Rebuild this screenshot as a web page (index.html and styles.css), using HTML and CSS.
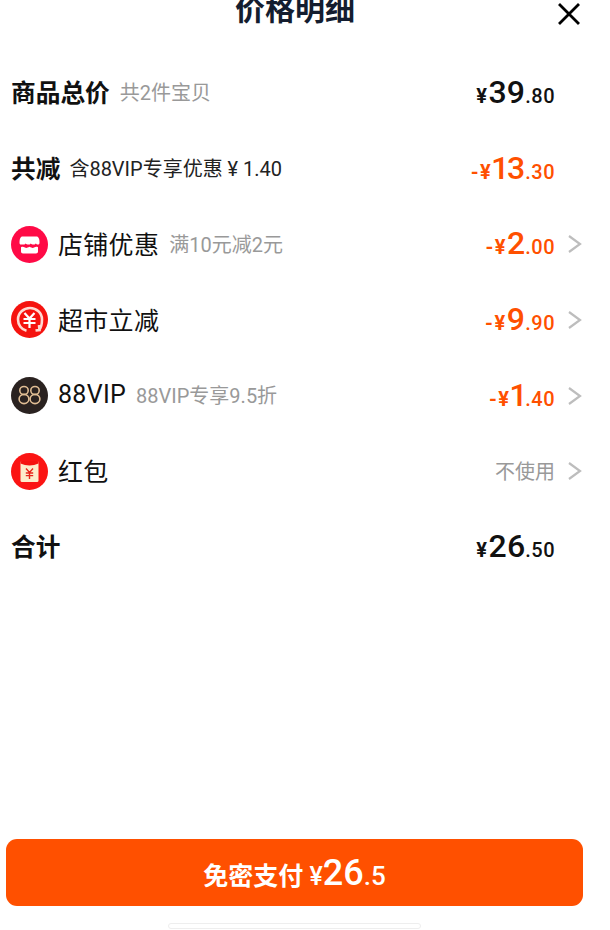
FILE: index.html
```html
<!DOCTYPE html>
<html>
<head>
	<meta charset="UTF-8">
	<title>价格明细</title>
	<link rel="stylesheet" href="styles.css">
</head>
<body>
	<div class="page">
		<div class="header">
			<h1 class="title">价格明细</h1>
			<svg class="close" width="24" height="24" viewBox="0 0 24 24"><path d="M3 3L21 21M21 3L3 21" stroke="#000" stroke-width="2.8" stroke-linecap="square" fill="none"/></svg>
		</div>
		<div class="list">
			<div class="row">
				<span class="label strong">商品总价</span>
				<span class="note">共2件宝贝</span>
				<span class="price"><i>¥</i><b>39</b><em>.80</em></span>
				<span class="slot"></span>
			</div>
			<div class="row">
				<span class="label strong">共减</span>
				<span class="note dark">含88VIP专享优惠 ¥ 1.40</span>
				<span class="price red"><i>-¥</i><b>13</b><em>.30</em></span>
				<span class="slot"></span>
			</div>
			<div class="row">
				<svg class="icon" viewBox="0 0 37 37">
					<circle cx="18.5" cy="18.5" r="18.5" fill="#ff0a46"/>
					<path d="M11.5 10.5H25.5C27.5 10.5 28.5 13 28.5 16.5C28.5 18 28 18.6 27 18.6C25.8 18.6 25.2 17.8 24.8 17.4C24.2 18.2 23.3 18.6 22.4 18.6C21.3 18.6 20.3 18 19.8 17.4C19.2 18.2 18.3 18.6 17.3 18.6C16.2 18.6 15.2 18 14.6 17.4C14 18.2 13.1 18.6 12 18.6H10C8.9 18.6 8.5 18 8.5 16.5C8.5 13 9.5 10.5 11.5 10.5Z" fill="#fff"/>
					<path d="M10 21.2C11.5 20.6 12.5 20.8 14 21.6C15.5 22.4 16.5 21.6 18.5 20.8C20.5 21.6 21.5 22.4 23 21.6C24.5 20.8 25.5 20.6 27 21.2V25.5C27 26.6 26.2 27.5 25 27.5H12C10.8 27.5 10 26.6 10 25.5Z" fill="#fff"/>
				</svg>
				<span class="label">店铺优惠</span>
				<span class="note">满10元减2元</span>
				<span class="price red"><i>-¥</i><b>2</b><em>.00</em></span>
				<svg class="slot arrow" viewBox="0 0 27 20"><path d="M14 2L25 10L14 18" stroke="#bdbdbd" stroke-width="2.2" fill="none"/></svg>
			</div>
			<div class="row">
				<svg class="icon" viewBox="0 0 37 37">
					<circle cx="18.5" cy="18.5" r="18.5" fill="#f5130f"/>
					<path d="M24 29.5L28 29L27.5 24M27.5 29C30 26.5 30.5 23 30.5 18.5C30.5 12 25 7 18.5 7C12 7 6.5 12 6.5 18.5C6.5 24 10 28.5 15 29.8" stroke="#ffd9d2" stroke-width="2.6" fill="none" transform="translate(0.5 0)"/>
					<path d="M13.5 12L18.5 17.5L23.5 12M12.5 18H24.5M12.5 22H24.5M18.5 17.5V27" stroke="#fff" stroke-width="2.2" fill="none"/>
				</svg>
				<span class="label">超市立减</span>
				<span class="price red"><i>-¥</i><b>9</b><em>.90</em></span>
				<svg class="slot arrow" viewBox="0 0 27 20"><path d="M14 2L25 10L14 18" stroke="#bdbdbd" stroke-width="2.2" fill="none"/></svg>
			</div>
			<div class="row">
				<svg class="icon" viewBox="0 0 37 37">
					<circle cx="18.5" cy="18.5" r="18.5" fill="#2a2220"/>
					<g fill="none" stroke="#e0bd94" stroke-width="1.6">
						<ellipse cx="13" cy="13.5" rx="4.2" ry="4"/><ellipse cx="13" cy="22" rx="4.9" ry="4.6"/>
						<ellipse cx="24" cy="13.5" rx="4.2" ry="4"/><ellipse cx="24" cy="22" rx="4.9" ry="4.6"/>
					</g>
				</svg>
				<span class="label">88VIP</span>
				<span class="note vip">88VIP专享9.5折</span>
				<span class="price red"><i>-¥</i><b>1</b><em>.40</em></span>
				<svg class="slot arrow" viewBox="0 0 27 20"><path d="M14 2L25 10L14 18" stroke="#bdbdbd" stroke-width="2.2" fill="none"/></svg>
			</div>
			<div class="row">
				<svg class="icon" viewBox="0 0 37 37">
					<circle cx="18.5" cy="18.5" r="18.5" fill="#fb1413"/>
					<rect x="9.5" y="8" width="18" height="21" rx="1.5" fill="#fdeccb"/>
					<path d="M9.5 9.5C9.5 8.6 10 8 11 8H26C27 8 27.5 8.6 27.5 9.5V10.5C22 13 15 13 9.5 10.5Z" fill="#f5130f"/>
					<path d="M15 15.5L18.5 19.5L22 15.5M14.8 20H22.2M14.8 22.6H22.2M18.5 19.5V26" stroke="#e8261c" stroke-width="1.4" fill="none"/>
				</svg>
				<span class="label">红包</span>
				<span class="price unused">不使用</span>
				<svg class="slot arrow" viewBox="0 0 27 20"><path d="M14 2L25 10L14 18" stroke="#bdbdbd" stroke-width="2.2" fill="none"/></svg>
			</div>
			<div class="row">
				<span class="label strong">合计</span>
				<span class="price"><i>¥</i><b>26</b><em>.50</em></span>
				<span class="slot"></span>
			</div>
		</div>
		<div class="footer">
			<button class="pay" type="button">免密支付 <i>¥</i><b>26</b><em>.5</em></button>
			<div class="home-bar"></div>
		</div>
	</div>
</body>
</html>
```

FILE: styles.css
```css
body {
	margin: 0;
	padding: 0;
	background-color: #fff;
	font-family: Roboto, "Noto Sans CJK SC", sans-serif;
}
.page {
	display: flex;
	flex-direction: column;
	width: 590px;
	height: 930px;
	overflow: hidden;
}
.header {
	display: flex;
	justify-content: center;
	align-items: center;
	position: relative;
	height: 20px;
	margin-bottom: 34px;
}
.title {
	margin: 0;
	font-size: 30px;
	line-height: 20px;
	font-weight: 700;
	color: #141d2f;
}
.close {
	position: absolute;
	top: 2px;
	right: 9px;
}
.list {
	display: flex;
	flex-direction: column;
	padding-left: 11px;
	padding-right: 8px;
}
.row {
	display: flex;
	align-items: center;
	height: 75.7px;
	flex-shrink: 0;
}
.icon {
	width: 37px;
	height: 37px;
	margin-top: 2px;
	margin-right: 10px;
	flex-shrink: 0;
}
.label {
	font-size: 25px;
	color: #111;
	font-weight: 400;
	letter-spacing: 0.3px;
}
.strong {
	font-size: 24.7px;
	font-weight: 700;
	letter-spacing: 0;
	margin-bottom: 2px;
}
.note {
	margin-left: 10px;
	font-size: 20px;
	color: #999;
}
.dark {
	color: #222;
	margin-left: 9px;
}
.vip {
	margin-left: 10px;
}
.price {
	margin-left: auto;
	display: flex;
	align-items: baseline;
	color: #111;
	font-weight: 500;
}
.price i {
	font-style: normal;
	font-size: 20px;
	font-weight: 700;
	letter-spacing: 1.5px;
}
.price b {
	font-size: 32px;
	font-weight: 500;
	font-variant-numeric: proportional-nums;
}
.price em {
	font-style: normal;
	font-size: 20px;
	letter-spacing: 0.5px;
}
.red {
	color: #ff5000;
}
.unused {
	color: #999;
	font-size: 20px;
	font-weight: 400;
}
.slot {
	width: 27px;
	height: 20px;
	flex-shrink: 0;
}
.arrow {
	margin-top: 2px;
}
.footer {
	margin-top: auto;
	display: flex;
	flex-direction: column;
	align-items: center;
}
.pay {
	width: 577px;
	height: 67px;
	margin-left: -1px;
	padding: 0;
	border: none;
	border-radius: 11px;
	background-color: #ff5000;
	color: #fff;
	font-family: Roboto, "Noto Sans CJK SC", sans-serif;
	font-size: 25px;
	font-weight: 700;
}
.pay i {
	font-style: normal;
	font-weight: 500;
}
.pay b {
	font-size: 36px;
	font-weight: 500;
}
.pay em {
	font-style: normal;
	font-size: 26px;
	font-weight: 500;
}
.home-bar {
	width: 253px;
	height: 6px;
	margin-top: 17px;
	margin-left: -2px;
	margin-bottom: 1px;
	border: 1px solid #eee;
	border-radius: 3px;
	box-sizing: border-box;
}
```
